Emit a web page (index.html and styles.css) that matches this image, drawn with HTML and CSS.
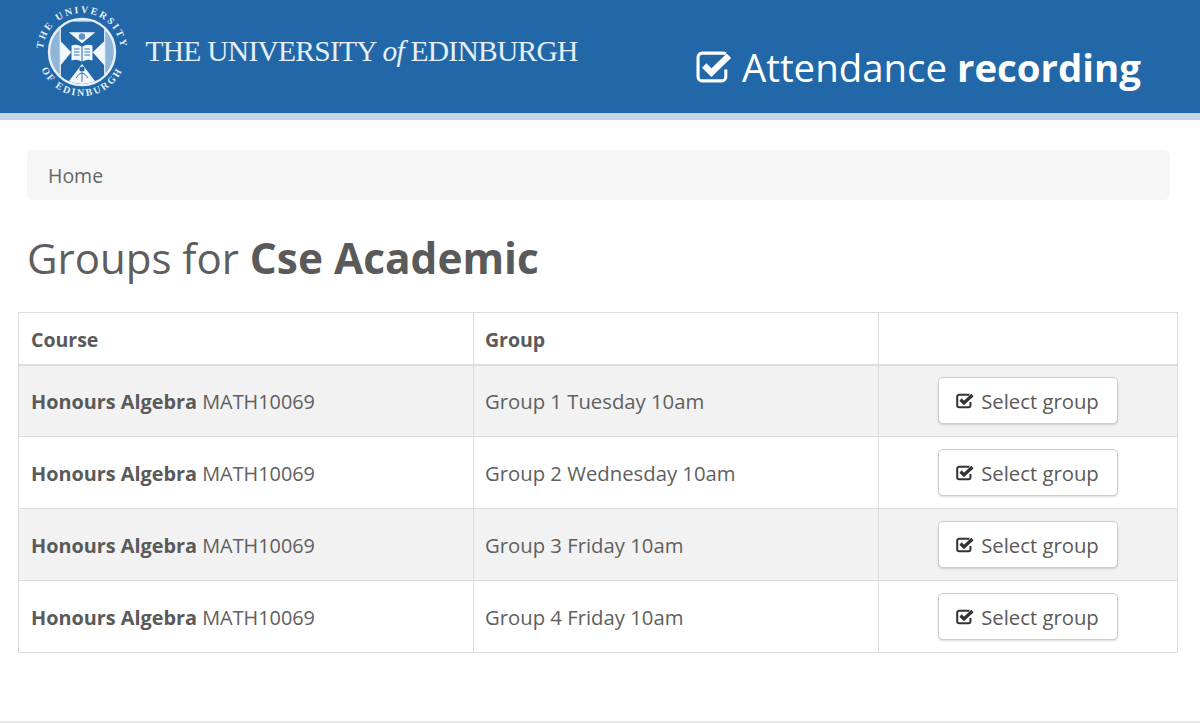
FILE: index.html
```html
<!DOCTYPE html>
<html lang="en">
<head>
<meta charset="utf-8">
<title>Attendance recording</title>
<link rel="stylesheet" href="styles.css">
</head>
<body>
<header class="site-header">
  <div class="brand">
    <svg class="crest" viewBox="0 0 92 92" width="92" height="92" aria-hidden="true">
      <defs>
        <path id="ring-top" d="M9.600 60 A39 39 0 1 1 82.400 60"/>
        <path id="ring-bottom" d="M2.400 52 A44 44 0 0 0 89.600 52"/>
        <clipPath id="disc"><circle cx="46" cy="46" r="32"/></clipPath>
      </defs>
      <text class="crest-text"><textPath href="#ring-top" startOffset="50%" text-anchor="middle">THE UNIVERSITY</textPath></text>
      <text class="crest-text"><textPath href="#ring-bottom" startOffset="50%" text-anchor="middle">OF EDINBURGH</textPath></text>
      <circle cx="46" cy="46" r="33" fill="#8fb6d8" stroke="#e8f0f7" stroke-width="2.400"/>
      <g clip-path="url(#disc)">
        <rect x="24.300" y="15" width="44.400" height="64" fill="#2268a8" stroke="#e8f0f7" stroke-width="1.200"/>
        <path class="crest-fill" d="M24.300 34.700 L35.300 46.300 L24.300 59.700Z M68.700 34.700 L56.700 46.300 L68.700 59.700Z M32.700 26.300 L59.300 26.300 L46 37.300Z M30 79 L62 79 L46 58Z"/>
        <path class="crest-fill" d="M35.500 39.500 Q41 37.500 45.500 40.500 L45.500 55.500 Q41 52.500 35.500 54.500Z M46.500 40.500 Q51 37.500 56.500 39.500 L56.500 54.500 Q51 52.500 46.500 55.500Z"/>
        <path class="crest-lines" d="M38 43 H43.500 M38 46 H43.500 M38 49 H43.500 M48.500 43 H54 M48.500 46 H54 M48.500 49 H54"/>
        <circle cx="46" cy="30.500" r="3.200" fill="#5d92c2"/>
        <circle cx="46" cy="63" r="2.600" fill="#2268a8"/>
        <path class="crest-lines" d="M40 72 Q46 62 52 72 M46 66 V76"/>
      </g>
    </svg>
    <span class="wordmark">THE UNIVERSITY <i>of</i> EDINBURGH</span>
  </div>
  <div class="app-title">
    <svg class="check-icon" viewBox="0 0 36 31" width="37" height="32" aria-hidden="true">
      <path d="M29 18 V25 A4 4 0 0 1 25 29 H6 A4 4 0 0 1 2 25 V6 A4 4 0 0 1 6 2 H26 Q28 2 29 2.500" fill="none" stroke="#fff" stroke-width="3"/>
      <path d="M8 14 L15 21 L32 4.500" fill="none" stroke="#fff" stroke-width="6"/>
    </svg>
    <span>Attendance <b>recording</b></span>
  </div>
</header>
<main class="content">
  <nav class="breadcrumb">Home</nav>
  <h1 class="page-title">Groups for <b>Cse Academic</b></h1>
  <table class="groups">
    <thead>
      <tr><th class="col-course">Course</th><th class="col-group">Group</th><th class="col-action"></th></tr>
    </thead>
    <tbody>
      <tr>
        <td class="course"><b>Honours Algebra</b> MATH10069</td>
        <td class="group">Group 1 Tuesday 10am</td>
        <td class="action"><a class="btn"><svg class="btn-icon" viewBox="0 0 19 16" width="19" height="16" aria-hidden="true"><path d="M14.500 9 V12.300 A2 2 0 0 1 12.500 14.300 H3.200 A2 2 0 0 1 1.200 12.300 V3.700 A2 2 0 0 1 3.200 1.700 H13.500" fill="none" stroke="#333" stroke-width="2"/><path d="M4.500 6.500 L8 10 L16.500 2" fill="none" stroke="#333" stroke-width="3.200"/></svg>Select group</a></td>
      </tr>
      <tr>
        <td class="course"><b>Honours Algebra</b> MATH10069</td>
        <td class="group">Group 2 Wednesday 10am</td>
        <td class="action"><a class="btn"><svg class="btn-icon" viewBox="0 0 19 16" width="19" height="16" aria-hidden="true"><path d="M14.500 9 V12.300 A2 2 0 0 1 12.500 14.300 H3.200 A2 2 0 0 1 1.200 12.300 V3.700 A2 2 0 0 1 3.200 1.700 H13.500" fill="none" stroke="#333" stroke-width="2"/><path d="M4.500 6.500 L8 10 L16.500 2" fill="none" stroke="#333" stroke-width="3.200"/></svg>Select group</a></td>
      </tr>
      <tr>
        <td class="course"><b>Honours Algebra</b> MATH10069</td>
        <td class="group">Group 3 Friday 10am</td>
        <td class="action"><a class="btn"><svg class="btn-icon" viewBox="0 0 19 16" width="19" height="16" aria-hidden="true"><path d="M14.500 9 V12.300 A2 2 0 0 1 12.500 14.300 H3.200 A2 2 0 0 1 1.200 12.300 V3.700 A2 2 0 0 1 3.200 1.700 H13.500" fill="none" stroke="#333" stroke-width="2"/><path d="M4.500 6.500 L8 10 L16.500 2" fill="none" stroke="#333" stroke-width="3.200"/></svg>Select group</a></td>
      </tr>
      <tr>
        <td class="course"><b>Honours Algebra</b> MATH10069</td>
        <td class="group">Group 4 Friday 10am</td>
        <td class="action"><a class="btn"><svg class="btn-icon" viewBox="0 0 19 16" width="19" height="16" aria-hidden="true"><path d="M14.500 9 V12.300 A2 2 0 0 1 12.500 14.300 H3.200 A2 2 0 0 1 1.200 12.300 V3.700 A2 2 0 0 1 3.200 1.700 H13.500" fill="none" stroke="#333" stroke-width="2"/><path d="M4.500 6.500 L8 10 L16.500 2" fill="none" stroke="#333" stroke-width="3.200"/></svg>Select group</a></td>
      </tr>
    </tbody>
  </table>
</main>
<footer class="site-footer"></footer>
</body>
</html>
```
FILE: styles.css
```css
* { box-sizing: border-box; }
html, body { margin: 0; height: 100%; }
body {
  display: flex;
  flex-direction: column;
  height: 723px;
  overflow: hidden;
  background: #fff;
  color: #606060;
  font-family: "Open Sans", sans-serif;
  font-size: 19.5px;
  line-height: 28px;
}
.site-header {
  flex: none;
  height: 120px;
  background: #2268a8;
  border-bottom: 7px solid #c5d6e8;
  display: flex;
  justify-content: space-between;
  padding: 0 59px 0 36px;
}
.brand { display: flex; align-items: flex-start; gap: 17.5px; padding-top: 6px; }
.crest { flex: none; overflow: visible; }
.crest-text {
  font-family: "Liberation Serif", serif;
  font-size: 10px;
  font-weight: 700;
  letter-spacing: 2.1px;
  fill: #e6eff7;
}
.crest-fill { fill: #f2f7fb; }
.crest-lines { fill: none; stroke: #2268a8; stroke-width: .9; }
.wordmark {
  font-family: "Liberation Serif", serif;
  font-size: 29.5px;
  letter-spacing: -.74px;
  line-height: 34px;
  color: #e6eff7;
  padding-top: 28px;
  white-space: nowrap;
}
.app-title {
  display: flex;
  align-items: center;
  gap: 9px;
  color: #fff;
  font-size: 38.4px;
  line-height: 48px;
  padding-top: 44px;
  height: 89px;
  white-space: nowrap;
}
.app-title b { font-weight: 700; }
.check-icon { flex: none; }
.content {
  flex: 1;
  padding: 30px 22px 0 18px;
}
.breadcrumb {
  margin: 0 8px 0 9px;
  height: 50px;
  padding: 12px 21px;
  background: #f6f6f6;
  border-radius: 6px;
  color: #666;
}
.page-title {
  margin: 30px 0 26px 9px;
  font-size: 42px;
  font-weight: 400;
  line-height: 56px;
  color: #5e5e5e;
}
.page-title b { font-size: 42.4px; color: #5a5a5a; }
.groups {
  width: 1160px;
  table-layout: fixed;
  border-collapse: collapse;
  border: 1px solid #ddd;
}
.col-course { width: 455px; }
.col-group { width: 405px; }
.groups th, .groups td {
  border: 1px solid #ddd;
  padding: 0 12px;
  text-align: left;
  height: 72px;
}
.groups th { height: 52px; padding-top: 3px; font-weight: 700; border-bottom-width: 2px; color: #5a5a5a; }
.groups th.col-group { padding-left: 11px; }
.groups tbody tr:nth-child(odd) { background: #f2f2f2; }
.groups td.course { font-size: 19.85px; padding-top: 2px; }
.groups td.course b { color: #5a5a5a; }
.groups td.group { font-size: 20.3px; padding-left: 11px; }
.groups td.action { text-align: center; padding: 0; }
.btn {
  display: inline-flex;
  align-items: center;
  gap: 6px;
  height: 47px;
  padding: 0 18px 0 17px;
  background: #fff;
  border: 1px solid #ccc;
  border-radius: 5px;
  box-shadow: 0 1px 2px rgba(0,0,0,.15);
  color: #5a5a5a;
  font-size: 20.3px;
}
.btn-icon { flex: none; }
.site-footer {
  flex: none;
  height: 2px;
  background: #e7e7e7;
}
```
